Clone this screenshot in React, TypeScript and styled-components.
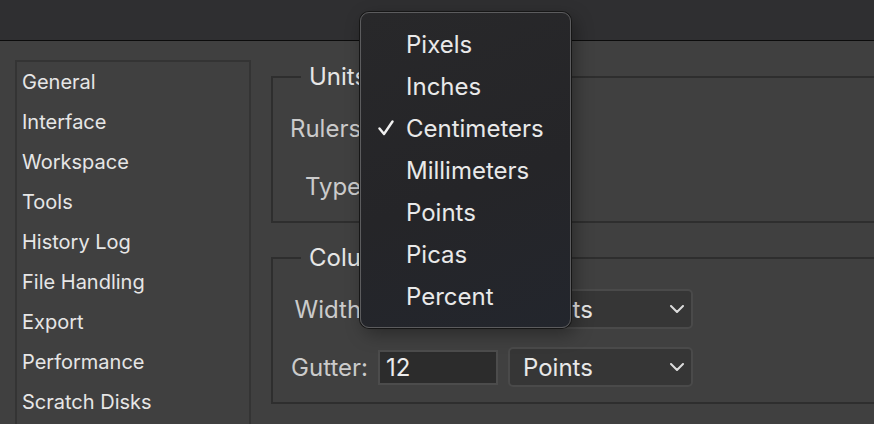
import styled, { createGlobalStyle } from "styled-components";

const GlobalStyle = createGlobalStyle`
  html, body {
    margin: 0;
    padding: 0;
    background: #404040;
  }
  body {
    font-family: Inter, "Noto Sans", "Liberation Sans", sans-serif;
    -webkit-font-smoothing: antialiased;
  }
`;

const sections = [
  "General",
  "Interface",
  "Workspace",
  "Tools",
  "History Log",
  "File Handling",
  "Export",
  "Performance",
  "Scratch Disks",
];

const units = [
  "Pixels",
  "Inches",
  "Centimeters",
  "Millimeters",
  "Points",
  "Picas",
  "Percent",
];

const Window = styled.div`
  position: relative;
  width: 874px;
  height: 424px;
  overflow: hidden;
  background: #404040;
`;

const TitleBar = styled.div`
  height: 40px;
  background: #2f2f31;
  border-bottom: 1px solid #0c0c0c;
`;

const Body = styled.div`
  display: flex;
  align-items: flex-start;
  gap: 20px;
  padding: 19px 0 0 15px;
`;

const SideList = styled.ul`
  flex: none;
  width: 227px;
  height: 400px;
  margin: 0;
  padding: 0 0 0 5px;
  list-style: none;
  border: 2px solid #343434;
  box-sizing: content-box;
`;

const SideItem = styled.li`
  height: 40px;
  display: flex;
  align-items: center;
  font-size: 20px;
  color: #e6e6e6;
`;

const Main = styled.div`
  flex: none;
  width: 640px;
  margin-top: 4px;
  display: flex;
  flex-direction: column;
  gap: 22px;
`;

const Group = styled.fieldset`
  margin: 0;
  padding: 18px 0 15px 0;
  border: 2px solid #2e2e2e;
  min-width: 0;
  display: grid;
  grid-template-columns: 95px 120px 185px;
  column-gap: 10px;
  row-gap: 18px;
  align-items: center;
`;

const Legend = styled.legend`
  margin-left: 28px;
  padding: 0 8px;
  font-size: 24px;
  line-height: 26px;
  color: #e6e6e6;
`;

const Label = styled.label`
  text-align: right;
  font-size: 24px;
  color: #cbcbcb;
  white-space: nowrap;
`;

const TextInput = styled.div`
  box-sizing: border-box;
  height: 35px;
  padding: 0 6px;
  display: flex;
  align-items: center;
  background: #2c2c2c;
  border: 2px solid #4c4c4c;
  font-size: 24px;
  color: #ececec;
`;

const Select = styled.div`
  box-sizing: border-box;
  height: 40px;
  padding: 0 7px 0 13px;
  display: flex;
  align-items: center;
  justify-content: space-between;
  background: #363636;
  border: 2px solid #4a4a4a;
  border-radius: 5px;
  font-size: 24px;
  color: #e8e8e8;
`;

const Menu = styled.ul`
  position: absolute;
  left: 360px;
  top: 12px;
  width: 211px;
  box-sizing: border-box;
  margin: 0;
  padding: 10px 0;
  list-style: none;
  border-radius: 9px;
  border: 1px solid #5c5c5e;
  background: linear-gradient(160deg, #28282a 0%, #252528 55%, #23262d 100%);
  box-shadow: 0 0 0 1px #161616, 4px 6px 18px rgba(0, 0, 0, 0.35);
`;

const MenuItem = styled.li`
  height: 42px;
  display: flex;
  align-items: center;
  padding-left: 17px;
  font-size: 24px;
  color: #e9e9e9;
`;

const CheckSlot = styled.span`
  width: 28px;
  display: flex;
  align-items: center;
`;

function Chevron() {
  return (
    <svg width="14" height="8" viewBox="0 0 14 8">
      <polyline
        points="1,1 7,7 13,1"
        fill="none"
        stroke="#dcdcdc"
        strokeWidth="2"
        strokeLinecap="round"
        strokeLinejoin="round"
      />
    </svg>
  );
}

function Check() {
  return (
    <svg width="16" height="16" viewBox="0 0 16 16">
      <polyline
        points="1.5,8.5 6,14 14.5,1.5"
        fill="none"
        stroke="#f0f0f0"
        strokeWidth="2.4"
        strokeLinecap="round"
        strokeLinejoin="round"
      />
    </svg>
  );
}

export default function App() {
  return (
    <>
      <GlobalStyle />
      <Window>
        <TitleBar />
        <Body>
          <SideList>
            {sections.map((s) => (
              <SideItem key={s}>{s}</SideItem>
            ))}
          </SideList>
          <Main>
            <Group>
              <Legend>Units</Legend>
              <Label>Rulers:</Label>
              <Select>
                <span />
                <Chevron />
              </Select>
              <div />
              <Label>Type:</Label>
              <Select>
                <span />
                <Chevron />
              </Select>
              <div />
            </Group>
            <Group>
              <Legend>Column Size</Legend>
              <Label>Width:</Label>
              <TextInput />
              <Select>
                Points
                <Chevron />
              </Select>
              <Label>Gutter:</Label>
              <TextInput>12</TextInput>
              <Select>
                Points
                <Chevron />
              </Select>
            </Group>
          </Main>
        </Body>
        <Menu>
          {units.map((u) => (
            <MenuItem key={u}>
              <CheckSlot>{u === "Centimeters" && <Check />}</CheckSlot>
              {u}
            </MenuItem>
          ))}
        </Menu>
      </Window>
    </>
  );
}
